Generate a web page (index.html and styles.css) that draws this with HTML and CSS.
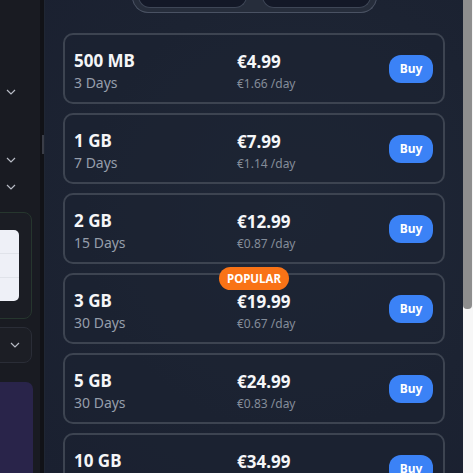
FILE: index.html
```html
<!DOCTYPE html>
<html>
<head>
<meta charset="utf-8">
<link rel="stylesheet" href="styles.css">
</head>
<body>
<div class="app">
  <aside class="side">
    <div class="chev c1"><svg width="10" height="6" viewBox="0 0 10 6"><path d="M1 1l4 4 4-4" fill="none" stroke="#b8bcc6" stroke-width="1.2"/></svg></div>
    <div class="chev c2"><svg width="10" height="6" viewBox="0 0 10 6"><path d="M1 1l4 4 4-4" fill="none" stroke="#b8bcc6" stroke-width="1.2"/></svg></div>
    <div class="chev c3"><svg width="10" height="6" viewBox="0 0 10 6"><path d="M1 1l4 4 4-4" fill="none" stroke="#b8bcc6" stroke-width="1.2"/></svg></div>
    <div class="preview">
      <div class="sheet"><div class="ln"></div><div class="ln"></div></div>
    </div>
    <div class="select"><svg width="10" height="6" viewBox="0 0 10 6"><path d="M1 1l4 4 4-4" fill="none" stroke="#b8bcc6" stroke-width="1.2"/></svg></div>
    <div class="promo"></div>
  </aside>
  <div class="divider"><div class="dthumb"></div></div>
  <main class="main">
    <div class="segment">
      <div class="seg-btn"></div>
      <div class="seg-sep"></div>
      <div class="seg-btn"></div>
    </div>
    <div class="plans">
      <div class="plan">
        <div class="info"><div class="name">500 MB</div><div class="dur">3 Days</div></div>
        <div class="price"><div class="amt">€4.99</div><div class="per">€1.66 /day</div></div>
        <button class="buy">Buy</button>
      </div>
      <div class="plan">
        <div class="info"><div class="name">1 GB</div><div class="dur">7 Days</div></div>
        <div class="price"><div class="amt">€7.99</div><div class="per">€1.14 /day</div></div>
        <button class="buy">Buy</button>
      </div>
      <div class="plan">
        <div class="info"><div class="name">2 GB</div><div class="dur">15 Days</div></div>
        <div class="price"><div class="amt">€12.99</div><div class="per">€0.87 /day</div></div>
        <button class="buy">Buy</button>
      </div>
      <div class="plan">
        <span class="badge">POPULAR</span>
        <div class="info"><div class="name">3 GB</div><div class="dur">30 Days</div></div>
        <div class="price"><div class="amt">€19.99</div><div class="per">€0.67 /day</div></div>
        <button class="buy">Buy</button>
      </div>
      <div class="plan">
        <div class="info"><div class="name">5 GB</div><div class="dur">30 Days</div></div>
        <div class="price"><div class="amt">€24.99</div><div class="per">€0.83 /day</div></div>
        <button class="buy">Buy</button>
      </div>
      <div class="plan">
        <div class="info"><div class="name">10 GB</div><div class="dur">30 Days</div></div>
        <div class="price"><div class="amt">€34.99</div><div class="per">€1.17 /day</div></div>
        <button class="buy">Buy</button>
      </div>
    </div>
  </main>
  <div class="scroll"><div class="sthumb"></div></div>
</div>
</body>
</html>
```

FILE: styles.css
```css
* { box-sizing: border-box; }
html, body { margin: 0; padding: 0; }
body {
  width: 473px;
  height: 473px;
  overflow: hidden;
  font-family: "Noto Sans", "Open Sans", sans-serif;
  background: #1a1c23;
}
.app {
  display: flex;
  height: 473px;
}
.side {
  width: 40px;
  flex: none;
  background: #191b22;
  position: relative;
  overflow: hidden;
}
.chev {
  position: absolute;
  left: 6px;
  line-height: 0;
}
.c1 { top: 89px; }
.c2 { top: 157px; }
.c3 { top: 184px; }
.preview {
  position: absolute;
  left: -40px;
  top: 212px;
  width: 72px;
  height: 107px;
  border: 1px solid #26362e;
  border-radius: 8px;
  background: #1b1d24;
}
.sheet {
  position: absolute;
  left: 10px;
  top: 17px;
  width: 48px;
  height: 71px;
  background: #eef0f7;
  border-radius: 5px;
  display: flex;
  flex-direction: column;
  justify-content: space-evenly;
}
.ln { height: 1px; background: #e0e3ea; }
.select {
  position: absolute;
  left: -40px;
  top: 327px;
  width: 72px;
  height: 36px;
  border: 1px solid #2a2d37;
  border-radius: 8px;
  background: #1c1e25;
  display: flex;
  align-items: center;
  justify-content: flex-end;
  padding-right: 11px;
}
.promo {
  position: absolute;
  left: -40px;
  top: 382px;
  width: 73px;
  height: 120px;
  background: #29244a;
  border-radius: 7px;
}
.divider {
  width: 5px;
  flex: none;
  background: #111217;
  position: relative;
  border-right: 1px solid #1f2633;
}
.dthumb {
  position: absolute;
  left: 2px;
  top: 135px;
  width: 2px;
  height: 19px;
  background: #3a3d47;
}
.main {
  flex: 1;
  background: radial-gradient(ellipse at 60% 45%, #202838 0%, #1c2332 60%, #1a2030 100%);
  padding: 0 18px;
  overflow: hidden;
}
.segment {
  margin: -18px auto 0;
  width: 245px;
  height: 31px;
  border: 1.5px solid #4a5263;
  border-top: none;
  border-radius: 0 0 16px 16px;
  background: #262d3b;
  display: flex;
  align-items: flex-end;
  padding: 0 5px 4px;
  gap: 0;
}
.seg-btn {
  flex: 1;
  height: 20px;
  background: #131827;
  border: 1px solid #3e4656;
  border-top: none;
  border-radius: 0 0 12px 12px;
}
.seg-sep {
  width: 1px;
  height: 4px;
  margin: 0 7px;
  align-self: flex-start;
  background: #5a6272;
}
.plans {
  margin-top: 20px;
  display: flex;
  flex-direction: column;
  gap: 9px;
}
.plan {
  position: relative;
  height: 71px;
  border: 2px solid #3d4451;
  border-radius: 10px;
  background: rgba(28, 35, 50, 0.55);
  display: flex;
  align-items: center;
  padding: 0 10px 0 9px;
}
.info {
  width: 163px;
  display: flex;
  flex-direction: column;
  margin-top: 4px;
}
.name {
  font-size: 17px;
  font-weight: 700;
  line-height: 22px;
  color: #f5f6f8;
}
.dur {
  font-size: 14px;
  line-height: 18px;
  margin-top: 2px;
  color: #969eab;
}
.price {
  flex: 1;
  display: flex;
  flex-direction: column;
  margin-top: 7px;
}
.amt {
  font-size: 17px;
  font-weight: 700;
  line-height: 22px;
  color: #f5f6f8;
}
.per {
  font-size: 12px;
  line-height: 18px;
  margin-top: 2px;
  color: #848c99;
}
.buy {
  width: 44px;
  height: 28px;
  border: none;
  border-radius: 12px;
  background: #3b82f6;
  color: #ffffff;
  font-family: "Noto Sans", sans-serif;
  font-size: 12px;
  font-weight: 700;
  padding: 0;
}
.badge {
  position: absolute;
  top: -8px;
  left: 50%;
  transform: translateX(-50%);
  height: 23px;
  padding: 0 8px;
  border-radius: 12px;
  background: #f97316;
  color: #ffffff;
  font-size: 11.5px;
  font-weight: 700;
  line-height: 23px;
  white-space: nowrap;
}
.scroll {
  width: 10px;
  flex: none;
  background: #f7f7f7;
  position: relative;
}
.sthumb {
  position: absolute;
  left: 0;
  top: 0;
  width: 9px;
  height: 309px;
  background: #8e8e8e;
  border-radius: 0 0 4px 4px;
}
```
